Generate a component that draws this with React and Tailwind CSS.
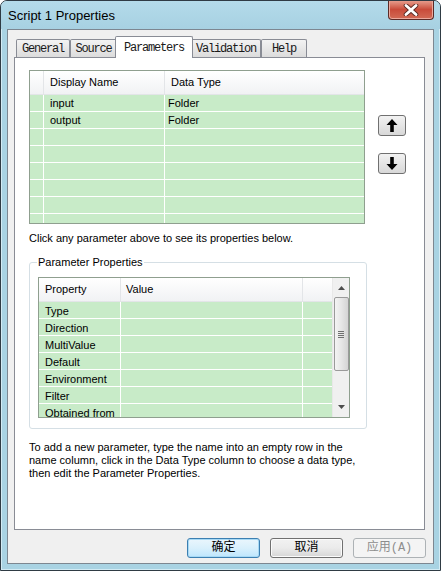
import React from "react";

// ===============================
// SMALL PIECES
// ===============================
const ui = { fontFamily: '"Liberation Sans", Arial, sans-serif' };
const tabFont = { fontFamily: '"Liberation Mono", "Courier New", monospace', letterSpacing: "-1.2px" };
const cjk = { fontFamily: '"Liberation Mono", "Noto Sans CJK SC", monospace' };

function Arrow({ down }) {
  return (
    <svg width="12" height="13" viewBox="0 0 12 13" className={down ? "rotate-180" : ""}>
      <polygon points="6,0 0.5,6 4.2,6 4.2,13 7.8,13 7.8,6 11.5,6" fill="#000" />
    </svg>
  );
}

function Tab({ label, active, w }) {
  if (active) {
    return (
      <div
        className={`${w} -mx-[2px] -mb-[1px] h-[22px] relative z-10 bg-white border border-b-0 border-[#898c95] rounded-t-[2px] flex items-start justify-center pt-[2px] text-[12px] text-[#1a1a1a]`}
        style={tabFont}
      >
        {label}
      </div>
    );
  }
  return (
    <div
      className={`${w} h-[18px] bg-gradient-to-b from-[#f3f3f3] to-[#dcdcdc] border border-b-0 border-[#898c95] rounded-t-[2px] flex items-center justify-center pt-[1px] text-[12px] text-[#1a1a1a]`}
      style={tabFont}
    >
      {label}
    </div>
  );
}

function WinButton({ label, variant }) {
  const base = "w-[73px] h-[20px] rounded-[3px] border flex items-center justify-center text-[12px]";
  const cls =
    variant === "default"
      ? "border-[#3c7fb1] bg-gradient-to-b from-[#eaf6fd] via-[#d9f0fc] to-[#bee6fd] text-black shadow-[inset_0_0_0_1px_#a7d9f5]"
      : variant === "disabled"
      ? "border-[#adb2b5] bg-[#f4f4f4] text-[#8d8d8d]"
      : "border-[#707070] bg-gradient-to-b from-[#f2f2f2] via-[#ebebeb] to-[#d6d6d6] text-black shadow-[inset_0_0_0_1px_#fbfbfb]";
  return (
    <div className={`${base} ${cls}`} style={cjk}>
      {label}
    </div>
  );
}

// ===============================
// PARAMETER GRID (top)
// ===============================
function ParamGrid() {
  const rows = [
    ["input", "Folder"],
    ["output", "Folder"],
    ["", ""],
    ["", ""],
    ["", ""],
    ["", ""],
    ["", ""],
    ["", ""],
  ];
  return (
    <div className="w-[336px] h-[154px] border border-[#8f9f8f] bg-[#c8ebc8] overflow-hidden text-[11px] text-black" style={ui}>
      <div className="flex h-[24px] bg-gradient-to-b from-white to-[#f1f2f4] border-b border-[#e3e5e8]">
        <div className="w-[14px] border-r border-[#e3e5e8]" />
        <div className="w-[121px] border-r border-[#e3e5e8] pl-[6px] flex items-center">Display Name</div>
        <div className="flex-1 pl-[6px] flex items-center">Data Type</div>
      </div>
      {rows.map((r, i) => (
        <div key={i} className="flex h-[17px] border-b border-white">
          <div className="w-[14px] border-r border-white" />
          <div className="w-[121px] border-r border-white pl-[6px] flex items-center pt-[1px]">{r[0]}</div>
          <div className="flex-1 pl-[3px] flex items-center pt-[1px]">{r[1]}</div>
        </div>
      ))}
    </div>
  );
}

// ===============================
// PROPERTY GRID (group box)
// ===============================
function PropGrid() {
  const props = ["Type", "Direction", "MultiValue", "Default", "Environment", "Filter", "Obtained from"];
  return (
    <div className="w-[312px] h-[141px] border border-[#8f9f8f] flex overflow-hidden text-[11px] text-black" style={ui}>
      <div className="flex-1 bg-[#c8ebc8] overflow-hidden">
        <div className="flex h-[24px] bg-gradient-to-b from-white to-[#f1f2f4] border-b border-[#e3e5e8]">
          <div className="w-[82px] border-r border-[#e3e5e8] pl-[6px] flex items-center">Property</div>
          <div className="w-[182px] border-r border-[#e3e5e8] pl-[5px] flex items-center">Value</div>
          <div className="flex-1" />
        </div>
        {props.map((p) => (
          <div key={p} className="flex h-[17px] shrink-0 border-b border-white">
            <div className="w-[82px] border-r border-white pl-[6px] flex items-center pt-[2px]">{p}</div>
            <div className="w-[182px] border-r border-white" />
            <div className="flex-1" />
          </div>
        ))}
      </div>

      {/* scrollbar */}
      <div className="w-[17px] bg-[#f0f0f0] border-l border-[#e8e8e8] flex flex-col items-center">
        <div className="h-[19px] flex items-center justify-center">
          <svg width="7" height="4" viewBox="0 0 7 4"><polygon points="3.5,0 7,4 0,4" fill="#4d4d4d" /></svg>
        </div>
        <div className="w-[15px] h-[74px] rounded-[2px] border border-[#9a9a9a] bg-gradient-to-r from-[#f4f4f4] via-[#e6e6e6] to-[#d4d4d4] flex flex-col items-center justify-center gap-[1px]">
          <div className="w-[6px] h-[1px] bg-[#707070]" />
          <div className="w-[6px] h-[1px] bg-[#707070]" />
          <div className="w-[6px] h-[1px] bg-[#707070]" />
          <div className="w-[6px] h-[1px] bg-[#707070]" />
        </div>
        <div className="flex-1" />
        <div className="h-[20px] flex items-center justify-center">
          <svg width="7" height="4" viewBox="0 0 7 4"><polygon points="0,0 7,0 3.5,4" fill="#4d4d4d" /></svg>
        </div>
      </div>
    </div>
  );
}

// ===============================
// DIALOG
// ===============================
export default function App() {
  return (
    <div className="w-[441px] h-[571px] bg-[#a9d3e3] border border-[#2f3b44] rounded-t-[7px] shadow-[inset_0_0_0_1px_#d3ebf4] flex flex-col overflow-hidden">

      {/* ===== TITLE BAR ===== */}
      <div className="h-[28px] flex justify-between bg-gradient-to-b from-[#b4dbea] to-[#a7d1e2]">
        <div className="pl-[7px] flex items-center pt-[1px] text-[13px] text-black" style={ui}>
          Script 1 Properties
        </div>
        <div className="self-start -mt-[1px] mr-[6px] w-[46px] h-[20px] rounded-b-[4px] border border-t-0 border-[#5b2a26] bg-gradient-to-b from-[#e8a394] via-[#c94b3a] to-[#d26a55] shadow-[inset_0_0_0_1px_#eba99d] flex items-center justify-center">
          <svg width="16" height="12" viewBox="0 0 16 12">
            <path d="M3 1.5 L13 10.5 M13 1.5 L3 10.5" stroke="#5a2a24" strokeWidth="4.6" strokeLinecap="round" />
            <path d="M3 1.5 L13 10.5 M13 1.5 L3 10.5" stroke="#ffffff" strokeWidth="2.8" strokeLinecap="round" />
          </svg>
        </div>
      </div>

      {/* ===== CLIENT AREA ===== */}
      <div className="ml-[6px] w-[427px] h-[535px] bg-[#f0f0f0] border border-[#7d8791] flex flex-col">

        {/* tabs */}
        <div className="flex items-end ml-[8px] pt-[5px] h-[27px]">
          <Tab label="General" w="w-[54px]" />
          <Tab label="Source" w="w-[47px]" />
          <Tab label="Parameters" w="w-[78px]" active />
          <Tab label="Validation" w="w-[70px]" />
          <Tab label="Help" w="w-[46px]" />
        </div>

        {/* tab panel */}
        <div className="ml-[6px] w-[411px] h-[473px] bg-white border border-[#898c95] pl-[14px] pt-[12px]">

          {/* parameters + move buttons */}
          <div className="flex">
            <ParamGrid />
            <div className="ml-[13px] mt-[45px] flex flex-col gap-[17px]">
              <div className="w-[28px] h-[21px] rounded-[3px] border border-[#707070] bg-gradient-to-b from-[#f2f2f2] to-[#d8d8d8] flex items-center justify-center">
                <Arrow />
              </div>
              <div className="w-[28px] h-[21px] rounded-[3px] border border-[#707070] bg-gradient-to-b from-[#f2f2f2] to-[#d8d8d8] flex items-center justify-center">
                <Arrow down />
              </div>
            </div>
          </div>

          <p className="mt-[8px] leading-[13px] text-[11px] text-black" style={ui}>
            Click any parameter above to see its properties below.
          </p>

          {/* group box */}
          <fieldset className="mt-[11px] w-[338px] border border-[#d5dfe5] rounded-[3px] px-[8px] pb-[10px]">
            <legend className="-ml-[1px] px-[1px] leading-[13px] text-[11px] text-black" style={ui}>
              Parameter Properties
            </legend>
            <div className="mt-[8px]">
              <PropGrid />
            </div>
          </fieldset>

          <p className="mt-[12px] leading-[13px] text-[11px] text-black" style={ui}>
            To add a new parameter, type the name into an empty row in the
            <br />
            name column, click in the Data Type column to choose a data type,
            <br />
            then edit the Parameter Properties.
          </p>
        </div>

        {/* dialog buttons */}
        <div className="mt-[8px] pr-[7px] flex justify-end gap-[10px]">
          <WinButton label="确定" variant="default" />
          <WinButton label="取消" />
          <WinButton label="应用(A)" variant="disabled" />
        </div>
      </div>
    </div>
  );
}
